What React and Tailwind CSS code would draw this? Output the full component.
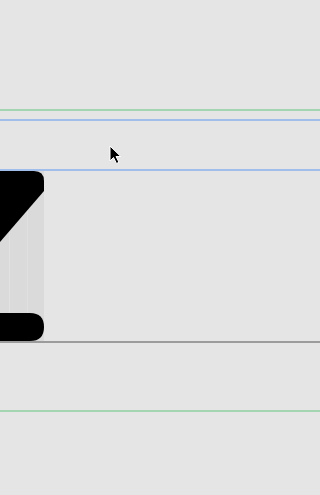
export default function App() {
    return (
        <div className="w-[320px] h-[495px] bg-[#e5e5e5] overflow-hidden flex flex-col">
            <div className="h-[109px] shrink-0" />
            {/* top guide lines */}
            <div className="h-[2px] bg-[#a3d5b2] shrink-0" />
            <div className="h-[8px] shrink-0" />
            <div className="h-[2px] bg-[#a1bde9] shrink-0" />
            <div className="relative h-[48px] shrink-0">
                {/* mouse pointer */}
                <svg className="absolute left-[109px] top-[24px]" width="14" height="20" viewBox="0 0 14 20">
                    <path d="M1 1 L1 16 L4.5 12.5 L7.5 18.5 L10 17.3 L7 11.5 L11.8 11.5 Z" fill="#000" stroke="#fff" strokeWidth="1" strokeLinejoin="round" />
                </svg>
            </div>
            <div className="h-[2px] bg-[#a1bde9] shrink-0" />
            {/* main row */}
            <div className="flex h-[170px] shrink-0">
                <div className="relative w-[44px] h-full bg-[#dadada]">
                    <svg className="absolute inset-0" width="44" height="170" viewBox="0 0 44 170">
                        <line x1="9.5" y1="0" x2="9.5" y2="170" stroke="#e2e2e2" strokeWidth="1" />
                        <line x1="27.5" y1="0" x2="27.5" y2="170" stroke="#e0e0e0" strokeWidth="1" />
                        <path d="M0 0 L34 0 Q44 0 44 10 L44 20 L0 71 Z" fill="#000" />
                        <path d="M0 142 L30 142 Q44 142 44 156 Q44 170 30 170 L0 170 Z" fill="#000" />
                    </svg>
                </div>
                <div className="flex-1" />
            </div>
            <div className="h-[2px] bg-[#9c9c9c] shrink-0" />
            <div className="h-[67px] shrink-0" />
            <div className="h-[2px] bg-[#a3d5b2] shrink-0" />
        </div>
    );
}
